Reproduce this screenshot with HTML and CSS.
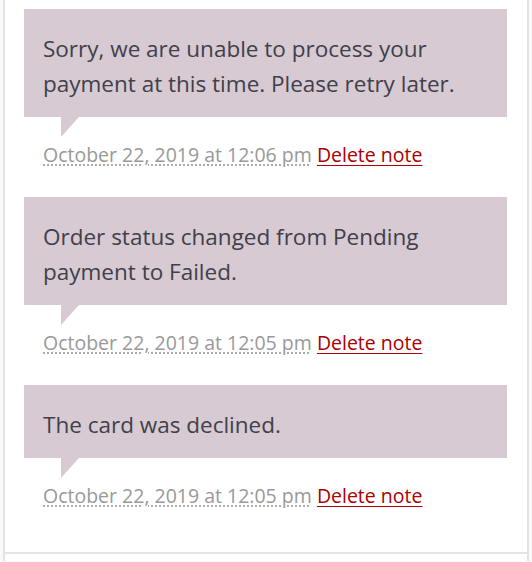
FILE: index.html
```html
<!DOCTYPE html>
<html>

<head>
    <meta charset="utf-8">
    <title>Order notes</title>
    <link rel="stylesheet" href="styles.css">
</head>

<body>
    <div class="panel">
        <ul class="notes">
            <li class="note">
                <div class="note-content">
                    <p>Sorry, we are unable to process your payment at this time. Please retry later.</p>
                </div>
                <p class="meta">
                    <abbr class="exact-date" title="2019-10-22 12:06:00">October 22, 2019 at 12:06 pm</abbr>
                    <a href="#" class="delete-note">Delete note</a>
                </p>
            </li>
            <li class="note">
                <div class="note-content">
                    <p>Order status changed from Pending payment to Failed.</p>
                </div>
                <p class="meta">
                    <abbr class="exact-date" title="2019-10-22 12:05:00">October 22, 2019 at 12:05 pm</abbr>
                    <a href="#" class="delete-note">Delete note</a>
                </p>
            </li>
            <li class="note">
                <div class="note-content">
                    <p>The card was declined.</p>
                </div>
                <p class="meta">
                    <abbr class="exact-date" title="2019-10-22 12:05:00">October 22, 2019 at 12:05 pm</abbr>
                    <a href="#" class="delete-note">Delete note</a>
                </p>
            </li>
        </ul>
        <div class="add-note"></div>
    </div>
</body>

</html>
```

FILE: styles.css
```css
* {
    box-sizing: border-box;
    margin: 0px;
    padding: 0px;
    font-family: "Open Sans", sans-serif;
}

body {
    background: #f9f9f9;
}

.panel {
    margin-left: 3px;
    width: 526px;
    background: #fff;
    border-left: 2px solid #e3e3e3;
    border-right: 2px solid #e3e3e3;
}

.notes {
    list-style: none;
    padding: 9px 20px 42px 19px;
}

.note {
    margin-bottom: 28px;
}

.note:last-child {
    margin-bottom: 0px;
}

.note-content {
    position: relative;
    background: #d7cad2;
    padding: 22px 19px 16px 19px;
    color: #40404a;
    font-size: 22.5px;
    line-height: 35px;
}

.note-content::after {
    content: "";
    position: absolute;
    left: 37px;
    bottom: -20px;
    width: 0;
    height: 0;
    border-style: solid;
    border-width: 20px 18px 0 0;
    border-color: #d7cad2 transparent;
}

.meta {
    padding: 24px 19px 0px 19px;
    font-size: 19.5px;
    line-height: 28px;
    color: #999;
}

.exact-date {
    text-decoration: underline dotted #aaa;
    text-underline-offset: 3px;
}

.delete-note {
    color: #a00;
    text-decoration: underline;
    text-underline-offset: 3px;
}

.add-note {
    height: 9px;
    border-top: 2px solid #e3e3e3;
}
```
